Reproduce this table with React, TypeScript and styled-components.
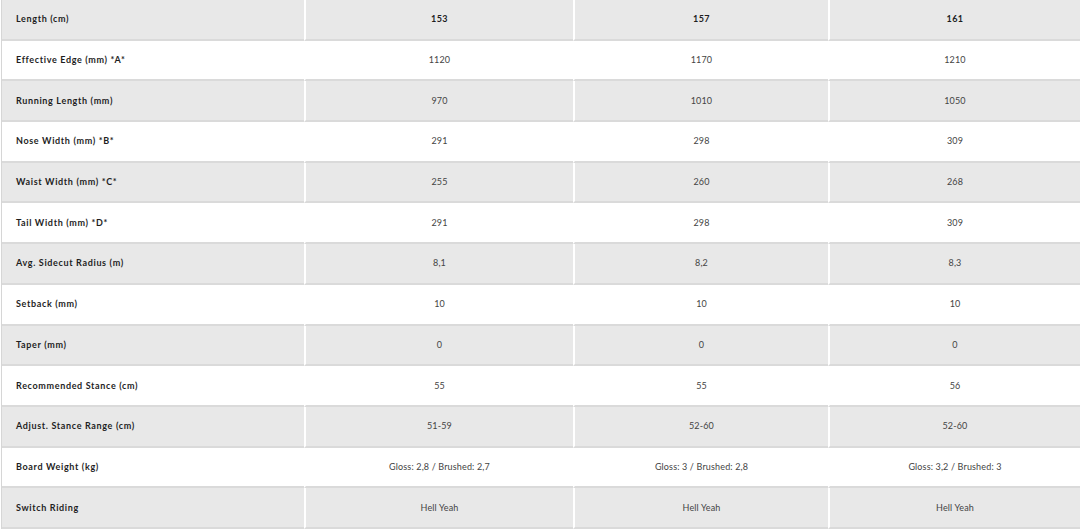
import React from "react";
import styled, { createGlobalStyle } from "styled-components";

const Global = createGlobalStyle`
  html, body { margin: 0; padding: 0; background: #ffffff; }
  body { font-family: Lato, "Open Sans", "Liberation Sans", sans-serif; }
`;

const Table = styled.div`
  display: grid;
  grid-template-columns: 302px 269px 255px 1fr;
  grid-auto-rows: 40.7px;
  margin-left: 1px;
  border-left: 1px solid #d6d6d6;
  width: 1079px;
  box-sizing: border-box;
`;

const Cell = styled.div<{ $gray: boolean; $label?: boolean; $head?: boolean }>`
  box-sizing: border-box;
  display: flex;
  align-items: center;
  justify-content: ${(p) => (p.$label ? "flex-start" : "center")};
  padding-left: ${(p) => (p.$label ? "14px" : "0")};
  background: ${(p) => (p.$gray ? "#e8e8e8" : "#ffffff")};
  border-bottom: 2px solid #dadada;
  border-left: ${(p) => (p.$label ? "none" : "2px solid #ffffff")};
  font-size: 9px;
  letter-spacing: ${(p) => (p.$label ? "0.65px" : p.$head ? "0.5px" : "0.15px")};
  font-weight: ${(p) => (p.$label || p.$head ? 700 : 400)};
  color: ${(p) => (p.$label || p.$head ? "#1e1e1e" : "#444444")};
  white-space: nowrap;
  padding-bottom: 1px;
`;

const rows: [string, string, string, string][] = [
  ["Length (cm)", "153", "157", "161"],
  ["Effective Edge (mm) *A*", "1120", "1170", "1210"],
  ["Running Length (mm)", "970", "1010", "1050"],
  ["Nose Width (mm) *B*", "291", "298", "309"],
  ["Waist Width (mm) *C*", "255", "260", "268"],
  ["Tail Width (mm) *D*", "291", "298", "309"],
  ["Avg. Sidecut Radius (m)", "8,1", "8,2", "8,3"],
  ["Setback (mm)", "10", "10", "10"],
  ["Taper (mm)", "0", "0", "0"],
  ["Recommended Stance (cm)", "55", "55", "56"],
  ["Adjust. Stance Range (cm)", "51-59", "52-60", "52-60"],
  ["Board Weight (kg)", "Gloss: 2,8 / Brushed: 2,7", "Gloss: 3 / Brushed: 2,8", "Gloss: 3,2 / Brushed: 3"],
  ["Switch Riding", "Hell Yeah", "Hell Yeah", "Hell Yeah"],
];

export default function App() {
  return (
    <>
      <Global />
      <Table>
        {rows.map((r, i) => (
          <React.Fragment key={i}>
            {r.map((c, j) => (
              <Cell key={j} $gray={i % 2 === 0} $label={j === 0} $head={i === 0}>
                {c}
              </Cell>
            ))}
          </React.Fragment>
        ))}
      </Table>
    </>
  );
}
